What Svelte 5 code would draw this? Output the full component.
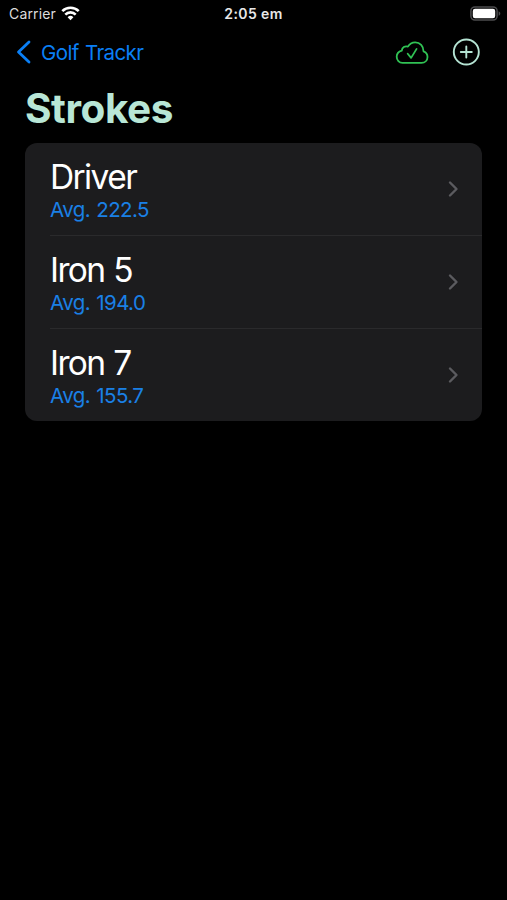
<script lang="ts">
	interface Club {
		name: string;
		average: number;
	}

	const clubs: Club[] = [
		{ name: 'Driver', average: 222.5 },
		{ name: 'Iron 5', average: 194 },
		{ name: 'Iron 7', average: 155.7 }
	];
</script>

<div class="screen">
	<div class="status-bar">
		<div class="carrier">
			<span>Carrier</span>
			<svg width="19" height="15" viewBox="0 0 19 15" fill="none" stroke="#fff" stroke-width="2.6">
				<path d="M1.3 5.2a11.6 11.6 0 0 1 16.4 0" />
				<path d="M4.3 8.6a7.3 7.3 0 0 1 10.4 0" />
				<path d="M9.5 14.2 6.6 11.2a4.1 4.1 0 0 1 5.8 0Z" fill="#fff" stroke="none" />
			</svg>
		</div>
		<span class="time">2:05 em</span>
		<svg class="battery" width="31" height="15" viewBox="0 0 31 15">
			<rect x="0.9" y="0.9" width="26.2" height="13.2" rx="4" fill="none" stroke="#4c4c4e" stroke-width="1.5" />
			<rect x="2.8" y="2.8" width="22.4" height="9.4" rx="2.2" fill="#fff" />
			<path d="M28.6 5.2c1 .4 1.7 1.3 1.7 2.3s-.7 1.9-1.7 2.3Z" fill="#4c4c4e" />
		</svg>
	</div>

	<nav>
		<button class="back">
			<svg width="15" height="24" viewBox="0 0 15 24" fill="none" stroke="currentColor" stroke-width="2.8" stroke-linecap="round" stroke-linejoin="round">
				<path d="M13 2 2.5 12 13 22" />
			</svg>
			<span>Golf Trackr</span>
		</button>
		<div class="actions">
			<button class="sync" aria-label="Synced">
				<svg width="34" height="24" viewBox="0 0 34 24" fill="none" stroke="currentColor" stroke-width="1.8" stroke-linecap="round" stroke-linejoin="round">
					<path d="M7.5 22.9h19c3.5 0 6-2.6 6-5.9 0-2.7-1.5-4.8-4-5.7.1-5.2-3.5-9-8.3-9-3.2 0-5.8 1.6-7.3 4.3-3-.9-5.9.8-6.1 4-2.9.8-5.1 3.1-5.1 6.1 0 3.5 2.5 6.2 5.8 6.2Z" />
					<path d="m12.7 13.7 3.4 4.2 5.5-9" />
				</svg>
			</button>
			<button class="add" aria-label="Add club">
				<svg width="28" height="28" viewBox="0 0 28 28" fill="none" stroke="currentColor" stroke-width="1.9" stroke-linecap="round">
					<circle cx="14.3" cy="14" r="12.5" />
					<path d="M14.3 8.5v11M8.8 14h11" />
				</svg>
			</button>
		</div>
	</nav>

	<h1>Strokes</h1>

	<ul class="clubs">
		{#each clubs as club}
			<li>
				<div class="row">
					<div class="details">
						<span class="name">{club.name}</span>
						<span class="average">Avg. {club.average.toFixed(1)}</span>
					</div>
					<svg width="11" height="18" viewBox="0 0 11 18" fill="none" stroke="#5b5b5f" stroke-width="2.4" stroke-linecap="round" stroke-linejoin="round">
						<path d="m2 2.5 6.5 6.5L2 15.5" />
					</svg>
				</div>
			</li>
		{/each}
	</ul>
</div>

<style>
	:global(body) {
		background: #000;
	}

	.screen {
		box-sizing: border-box;
		min-height: 900px;
		background: #000;
		color: #fff;
		font-family: Inter, 'Liberation Sans', sans-serif;
	}

	.status-bar {
		display: grid;
		grid-template-columns: 1fr auto 1fr;
		align-items: center;
		height: 27px;
		padding: 0 6px;
		font-size: 14px;
	}

	.carrier {
		display: flex;
		align-items: center;
		gap: 5px;
		padding-left: 3px;
		color: #dcdcdc;
		letter-spacing: 0.15px;
	}

	.time {
		font-weight: 600;
		color: #e8e8e8;
		letter-spacing: 0.4px;
	}

	.battery {
		justify-self: end;
	}

	nav {
		display: flex;
		align-items: center;
		justify-content: space-between;
		height: 50px;
		padding: 0 27px 0 16px;
	}

	button {
		display: flex;
		align-items: center;
		padding: 0;
		border: 0;
		background: none;
		font: inherit;
		cursor: pointer;
	}

	.back {
		gap: 10px;
		color: #0a7ff5;
		font-size: 20.5px;
		letter-spacing: -0.6px;
		word-spacing: 1px;
	}

	.actions {
		display: flex;
		align-items: center;
		gap: 23px;
	}

	.sync {
		color: #30c254;
	}

	.add {
		color: #b5e3d3;
	}

	h1 {
		margin: 0;
		padding: 7px 25px 9px;
		font-size: 40.5px;
		line-height: 50px;
		font-weight: 700;
		letter-spacing: -0.45px;
		color: #b8e6d6;
	}

	.clubs {
		margin: 0 25px;
		padding: 0;
		list-style: none;
		background: #1c1c1e;
		border-radius: 12px;
	}

	li {
		padding-left: 25px;
	}

	.row {
		display: flex;
		align-items: center;
		justify-content: space-between;
		height: 92px;
		padding-right: 23px;
	}

	li + li .row {
		border-top: 1px solid #2a2a2c;
	}

	.details {
		display: flex;
		flex-direction: column;
		padding-top: 1px;
	}

	.name {
		font-size: 33.5px;
		line-height: 40px;
		letter-spacing: -1.6px;
		word-spacing: 1px;
	}

	.average {
		font-size: 20.5px;
		line-height: 25px;
		letter-spacing: -0.6px;
		word-spacing: 1.2px;
		color: #1a80e6;
	}
</style>
